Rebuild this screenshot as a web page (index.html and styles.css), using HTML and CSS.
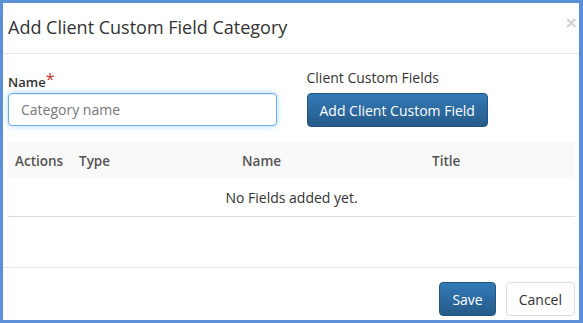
FILE: index.html
```html
<!DOCTYPE html>
<html lang="en">
  <head>
    <meta charset="UTF-8" />
    <title>Add Client Custom Field Category</title>
    <link rel="stylesheet" href="styles.css">
  </head>

  <body>
    <div class="modal">
      <div class="modal-header">
        <h4 class="modal-title">Add Client Custom Field Category</h4>
        <button class="close" type="button">&times;</button>
      </div>

      <div class="modal-body">
        <div class="form-row">
          <div class="form-group">
            <label class="label-strong" for="categoryName">Name<span class="required">*</span></label>
            <input id="categoryName" class="form-control" type="text" placeholder="Category name">
          </div>
          <div class="form-group">
            <label>Client Custom Fields</label>
            <div><button class="btn btn-primary btn-add" type="button">Add Client Custom Field</button></div>
          </div>
        </div>

        <table class="fields-table">
          <colgroup>
            <col class="col-actions">
            <col class="col-type">
            <col class="col-name">
            <col class="col-title">
          </colgroup>
          <thead>
            <tr>
              <th>Actions</th>
              <th>Type</th>
              <th>Name</th>
              <th>Title</th>
            </tr>
          </thead>
          <tbody>
            <tr>
              <td class="empty" colspan="4">No Fields added yet.</td>
            </tr>
          </tbody>
        </table>
      </div>

      <div class="modal-footer">
        <button class="btn btn-primary" type="button">Save</button>
        <button class="btn btn-default" type="button">Cancel</button>
      </div>
    </div>
  </body>
</html>
```

FILE: styles.css
```css
html,
body {
  margin: 0;
  height: 100%;
}

body {
  font-family: "Open Sans", "Noto Sans", sans-serif;
  font-size: 14px;
  color: #333;
  background: #fff;
}

.modal {
  box-sizing: border-box;
  height: 323px;
  display: flex;
  flex-direction: column;
  border: 3px solid #5b8fd8;
  border-right-width: 4px;
  background: #fff;
}

.modal-header {
  display: flex;
  align-items: center;
  justify-content: space-between;
  height: 50px;
  padding: 0 5px;
  border-bottom: 1px solid #e5e5e5;
}

.modal-title {
  margin: 0 0 2px;
  font-size: 18px;
  font-weight: 400;
  color: #333;
}

.close {
  padding: 0;
  margin: 0 -4px 10px 0;
  border: none;
  background: none;
  font-family: "DejaVu Sans", sans-serif;
  font-size: 16px;
  line-height: 1;
  font-weight: bold;
  color: #d0d0d0;
  cursor: pointer;
}

.modal-body {
  flex: 1;
  padding: 14px 4px 0 5px;
}

.form-row {
  display: grid;
  grid-template-columns: 1fr 1fr;
  gap: 30px;
}

.form-group label {
  display: block;
  height: 20px;
  margin-bottom: 5px;
  font-size: 14px;
  color: #333;
}

.form-group .label-strong {
  font-size: 13px;
  font-weight: 600;
}

.required {
  color: #c9302c;
  font-size: 16px;
  font-weight: 400;
  vertical-align: 2px;
}

.form-control {
  box-sizing: border-box;
  display: block;
  width: 100%;
  height: 33px;
  padding: 6px 12px;
  font-family: inherit;
  font-size: 14px;
  color: #555;
  border: 1px solid #66afe9;
  border-radius: 4px;
  outline: none;
  box-shadow: inset 0 1px 1px rgba(0, 0, 0, 0.075), 0 0 6px rgba(102, 175, 233, 0.5);
}

.form-control::placeholder {
  color: #777;
}

.btn {
  box-sizing: border-box;
  height: 34px;
  padding: 6px 12px;
  font-family: inherit;
  font-size: 14px;
  border-radius: 4px;
  cursor: pointer;
}

.btn-primary {
  color: #fff;
  border: 1px solid #245580;
  background: linear-gradient(to bottom, #337ab7 0, #265a88 100%);
}

.btn-default {
  color: #333;
  border: 1px solid #ddd;
  background: #fff;
}

.fields-table {
  width: 100%;
  margin-top: 15px;
  border-collapse: collapse;
  table-layout: fixed;
}

.col-actions {
  width: 64px;
}

.col-type {
  width: 163px;
}

.col-name {
  width: 190px;
}

.fields-table th {
  height: 37px;
  padding: 0 7px;
  text-align: left;
  font-size: 13.5px;
  font-weight: 600;
  color: #555;
  background: #f9f9f9;
}

.fields-table td {
  height: 37px;
  padding: 0 8px;
  border-bottom: 1px solid #ddd;
}

.fields-table .empty {
  text-align: center;
}

.modal-footer {
  display: flex;
  justify-content: flex-end;
  align-items: flex-start;
  gap: 10px;
  height: 53px;
  padding: 14px 4px 0 0;
  box-sizing: border-box;
  border-top: 1px solid #e5e5e5;
}
```
